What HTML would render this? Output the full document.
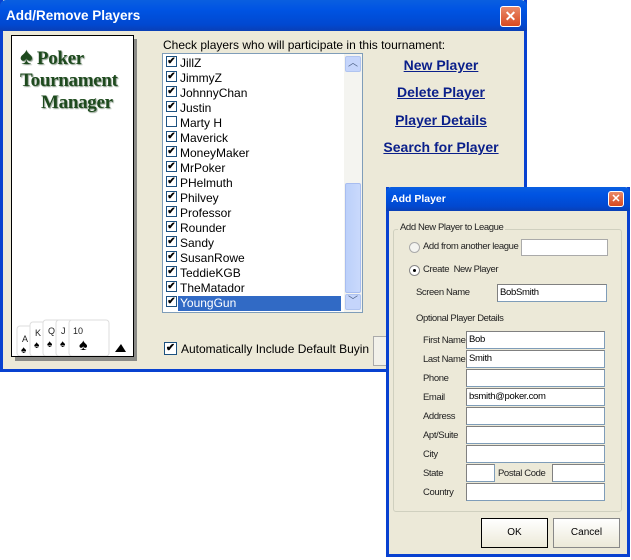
<!DOCTYPE html>
<html><head><meta charset="utf-8"><style>
*{margin:0;padding:0;box-sizing:border-box}
body{width:631px;height:560px;background:#fff;position:relative;overflow:hidden;font-family:"Liberation Sans",sans-serif;font-size:12px;color:#000}
.a{position:absolute}
.win{background:#ece9d8}
.tb{background:linear-gradient(#0a5fe0,#0054e3 30%,#0148d0 80%,#0a3fb5);color:#fff;font-weight:bold}
.x{background:linear-gradient(#e98a6a,#d9491f);border:1px solid #fff;border-radius:3px;color:#fff;text-align:center;font-weight:bold}
.cb{position:absolute;left:3px;width:11px;height:11px;border:1px solid #1c5180;background:#fff;font-size:10px;line-height:9px;text-align:center;font-weight:bold}
.row{position:absolute;left:0;width:180px;height:15px;line-height:15px}
.row span{position:absolute;left:15px;padding:0 2px}
.lnk{position:absolute;color:#0a1f8a;font-weight:bold;text-decoration:underline;font-size:14px;text-align:center;width:150px}
.inp{position:absolute;background:#fff;border:1px solid #7f9db9;border-top-color:#808080;border-left-color:#808080;height:18px;font-size:9.5px;line-height:16px;padding-left:2px;letter-spacing:-0.3px}
.lb{position:absolute;font-size:9.5px;color:#222;letter-spacing:-0.4px;white-space:nowrap}
.btn{position:absolute;background:linear-gradient(#fff,#ece9d8);border:1px solid #888;font-size:10px;text-align:center;line-height:28px}
</style></head><body>
<div class="a win" style="left:0;top:0;width:527px;height:372px;border:3px solid #0841d0;border-top:none"></div>
<div class="a tb" style="left:0;top:0;width:527px;height:31px;border-radius:6px 6px 0 0;font-size:13.5px;line-height:31px;padding-left:6px">Add/Remove Players</div>
<div class="a x" style="left:500px;top:6px;width:21px;height:21px;line-height:19px;font-size:14px">✕</div>
<div class="a" style="left:15px;top:39px;width:122px;height:322px;background:#8a8a86"></div>
<div class="a" style="left:11px;top:35px;width:123px;height:322px;background:#fff;border:1px solid #000"></div>
<div class="a" style="left:20px;top:46px;font-family:'Liberation Serif',serif;font-weight:bold;color:#1e4a1e;font-size:19px;line-height:22px;text-shadow:1px 1px 1px #8a9a8a;letter-spacing:-0.3px">
<div><span style="font-size:24px">♠</span> Poker</div><div>Tournament</div><div style="padding-left:21px">Manager</div></div>
<svg class="a" style="left:15px;top:318px" width="115" height="38" viewBox="0 0 115 38">
<g fill="#fff" stroke="#ddd"><rect x="2" y="8" width="22" height="30" rx="3"/><rect x="15" y="4" width="22" height="34" rx="3"/><rect x="28" y="2" width="22" height="36" rx="3"/><rect x="41" y="2" width="22" height="36" rx="3"/><rect x="54" y="2" width="40" height="36" rx="3"/></g>
<g font-size="9" font-family="Liberation Sans" fill="#222"><text x="7" y="24">A</text><text x="20" y="18">K</text><text x="33" y="16">Q</text><text x="46" y="16">J</text><text x="58" y="16">10</text></g>
<g fill="#000" font-size="10"><text x="6" y="35">♠</text><text x="19" y="30">♠</text><text x="32" y="29">♠</text><text x="45" y="29">♠</text><text x="64" y="32" font-size="16">♠</text><path d="M100 34 L106 26 L111 34Z"/></g>
</svg>
<div class="a" style="left:163px;top:38px">Check players who will participate in this tournament:</div>
<div class="a" style="left:162px;top:53px;width:201px;height:260px;background:#fff;border:1px solid #7f9db9">
<div class="row" style="top:2px"><div class="cb">✔</div><span>JillZ</span></div>
<div class="row" style="top:17px"><div class="cb">✔</div><span>JimmyZ</span></div>
<div class="row" style="top:32px"><div class="cb">✔</div><span>JohnnyChan</span></div>
<div class="row" style="top:47px"><div class="cb">✔</div><span>Justin</span></div>
<div class="row" style="top:62px"><div class="cb"></div><span>Marty H</span></div>
<div class="row" style="top:77px"><div class="cb">✔</div><span>Maverick</span></div>
<div class="row" style="top:92px"><div class="cb">✔</div><span>MoneyMaker</span></div>
<div class="row" style="top:107px"><div class="cb">✔</div><span>MrPoker</span></div>
<div class="row" style="top:122px"><div class="cb">✔</div><span>PHelmuth</span></div>
<div class="row" style="top:137px"><div class="cb">✔</div><span>Philvey</span></div>
<div class="row" style="top:152px"><div class="cb">✔</div><span>Professor</span></div>
<div class="row" style="top:167px"><div class="cb">✔</div><span>Rounder</span></div>
<div class="row" style="top:182px"><div class="cb">✔</div><span>Sandy</span></div>
<div class="row" style="top:197px"><div class="cb">✔</div><span>SusanRowe</span></div>
<div class="row" style="top:212px"><div class="cb">✔</div><span>TeddieKGB</span></div>
<div class="row" style="top:227px"><div class="cb">✔</div><span>TheMatador</span></div>
<div class="row" style="top:242px"><div class="cb">✔</div><span style="background:#316ac5;color:#fff;width:163px">YoungGun</span></div>
<div class="a" style="left:181px;top:0;width:18px;height:258px;background:#f4f4f0"></div>
<div class="a" style="left:182px;top:2px;width:16px;height:16px;background:#c5d5fb;border:1px solid #b0c4f0;border-radius:2px;color:#4d6185;text-align:center;font-size:10px;line-height:14px">︿</div>
<div class="a" style="left:182px;top:129px;width:16px;height:110px;background:linear-gradient(90deg,#bcd0fa,#c9d9fc);border:1px solid #a8bdf0;border-radius:2px"></div>
<div class="a" style="left:182px;top:240px;width:16px;height:16px;background:#c5d5fb;border:1px solid #b0c4f0;border-radius:2px;color:#4d6185;text-align:center;font-size:10px;line-height:14px">﹀</div>
</div>
<div class="lnk" style="left:366px;top:57px">New Player</div>
<div class="lnk" style="left:366px;top:84px">Delete Player</div>
<div class="lnk" style="left:366px;top:112px">Player Details</div>
<div class="lnk" style="left:366px;top:139px">Search for Player</div>
<div class="a" style="left:164px;top:342px;width:13px;height:13px;border:1px solid #1c5180;background:#fff;font-size:11px;line-height:11px;text-align:center;font-weight:bold">✔</div>
<div class="a" style="left:181px;top:342px">Automatically Include Default Buyin</div>
<div class="a" style="left:373px;top:336px;width:20px;height:30px;background:#f2f1ea;border:1px solid #aaa"></div>
<div class="a win" style="left:386px;top:187px;width:244px;height:370px;border:3px solid #0841d0;border-top:none"></div>
<div class="a tb" style="left:386px;top:187px;width:244px;height:24px;border-radius:5px 5px 0 0;font-size:10.5px;line-height:24px;padding-left:5px">Add Player</div>
<div class="a x" style="left:608px;top:191px;width:16px;height:16px;line-height:14px;font-size:11px">✕</div>
<div class="a" style="left:393px;top:229px;width:229px;height:283px;border:1px solid #d0d0bf;border-radius:3px"></div>
<div class="lb" style="left:398px;top:222px;background:#ece9d8;padding:0 2px">Add New Player to League</div>
<div class="a" style="left:409px;top:242px;width:11px;height:11px;border-radius:50%;border:1px solid #aaa;background:#f4f4f0"></div>
<div class="lb" style="left:423px;top:241px">Add from another league</div>
<div class="inp" style="left:521px;top:239px;width:87px;height:17px;border-color:#aaa"></div>
<div class="a" style="left:409px;top:265px;width:11px;height:11px;border-radius:50%;border:1px solid #888;background:#fff"><div style="margin:3px;width:3px;height:3px;background:#000;border-radius:50%"></div></div>
<div class="lb" style="left:423px;top:264px">Create &nbsp;New Player</div>
<div class="lb" style="left:416px;top:287px">Screen Name</div>
<div class="inp" style="left:497px;top:284px;width:110px">BobSmith</div>
<div class="lb" style="left:416px;top:313px">Optional Player Details</div>
<div class="lb" style="left:423px;top:335px">First Name</div><div class="inp" style="left:466px;top:331px;width:139px">Bob</div>
<div class="lb" style="left:423px;top:354px">Last Name</div><div class="inp" style="left:466px;top:350px;width:139px">Smith</div>
<div class="lb" style="left:423px;top:373px">Phone</div><div class="inp" style="left:466px;top:369px;width:139px"></div>
<div class="lb" style="left:423px;top:392px">Email</div><div class="inp" style="left:466px;top:388px;width:139px">bsmith@poker.com</div>
<div class="lb" style="left:423px;top:411px">Address</div><div class="inp" style="left:466px;top:407px;width:139px"></div>
<div class="lb" style="left:423px;top:430px">Apt/Suite</div><div class="inp" style="left:466px;top:426px;width:139px"></div>
<div class="lb" style="left:423px;top:449px">City</div><div class="inp" style="left:466px;top:445px;width:139px"></div>
<div class="lb" style="left:423px;top:468px">State</div><div class="inp" style="left:466px;top:464px;width:29px"></div>
<div class="lb" style="left:498px;top:468px">Postal Code</div><div class="inp" style="left:552px;top:464px;width:53px"></div>
<div class="lb" style="left:423px;top:487px">Country</div><div class="inp" style="left:466px;top:483px;width:139px"></div>
<div class="btn" style="left:481px;top:518px;width:67px;height:30px;border:1px solid #000">OK</div>
<div class="btn" style="left:553px;top:518px;width:67px;height:30px">Cancel</div>
</body></html>
